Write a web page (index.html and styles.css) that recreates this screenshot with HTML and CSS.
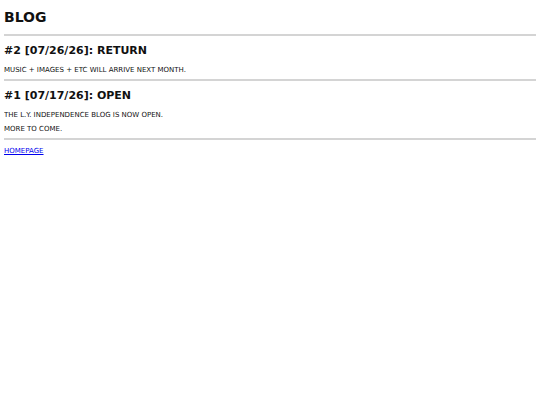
FILE: index.html
```html
<!DOCTYPE html>
<html lang="en">
  <head>
    <meta charset="UTF-8" />
    <title>Blog</title>
    <link rel="stylesheet" href="styles.css">
  </head>
  <body>
    <h1>BLOG</h1>
    <hr />
    <div class="post">
      <h2>#2 [07/26/26]: RETURN</h2>
      <p>MUSIC + IMAGES + ETC WILL ARRIVE NEXT MONTH.</p>
    </div>
    <hr />
    <div class="post">
      <h2>#1 [07/17/26]: OPEN</h2>
      <p>THE L.Y. INDEPENDENCE BLOG IS NOW OPEN.</p>
      <p>MORE TO COME.</p>
    </div>
    <hr />
    <p class="home"><a href="#">HOMEPAGE</a></p>
  </body>
</html>
```

FILE: styles.css
```css
body {
  font-family: Verdana, "DejaVu Sans", sans-serif;
  font-size: 7px;
  line-height: 9px;
  color: #111;
  background-color: #fff;
  margin: 4px;
}
h1 {
  font-size: 14px;
  line-height: 16px;
  margin: 5px 0 9px 0;
}
h2 {
  font-size: 11px;
  line-height: 14px;
  margin: 8px 0 8px 0;
}
p {
  margin: 5px 0 5px 0;
}
hr {
  border: none;
  border-top: 2px solid #d4d4d4;
  margin: 0;
}
.post p:last-child {
  margin-bottom: 4px;
}
.home {
  margin-top: 7px;
}
a {
  color: #0000ee;
}
```
